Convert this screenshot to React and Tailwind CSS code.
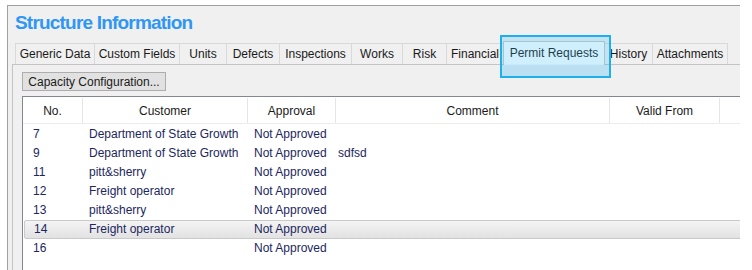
import React from "react";

const tabs = [
  { label: "Generic Data", w: "w-[80px]", first: true },
  { label: "Custom Fields", w: "w-[85px]" },
  { label: "Units", w: "w-[47px]" },
  { label: "Defects", w: "w-[53px]" },
  { label: "Inspections", w: "w-[72px]" },
  { label: "Works", w: "w-[51px]" },
  { label: "Risk", w: "w-[44px]" },
  { label: "Financial", w: "w-[57px]" },
  { label: "Permit Requests", w: "w-[102px]", selected: true },
  { label: "History", w: "w-[48px]" },
  { label: "Attachments", w: "w-[75px]" },
];

const rows = [
  ["7", "Department of State Growth", "Not Approved", ""],
  ["9", "Department of State Growth", "Not Approved", "sdfsd"],
  ["11", "pitt&sherry", "Not Approved", ""],
  ["12", "Freight operator", "Not Approved", ""],
  ["13", "pitt&sherry", "Not Approved", ""],
  ["14", "Freight operator", "Not Approved", "", true],
  ["16", "", "Not Approved", ""],
];

export default function App() {
  return (
    <div className="relative w-[752px] h-[270px] overflow-hidden bg-white font-['Liberation_Sans',Arial,sans-serif] text-[12px] text-[#1a1a1a]">
      <div className="ml-[7px] mt-[5px] w-[733px] h-[265px] border-l border-t border-[#a0a0a0] bg-[#f0f0f0] overflow-hidden">
        <div className="h-[37px] pl-[7px] pt-[6px] text-[19px] leading-[22px] font-bold tracking-[-0.8px] text-[#2e96f5]">
          Structure Information
        </div>
        <div className="flex items-end h-[21px] pl-[7px]">
          {tabs.map((t) =>
            t.selected ? (
              <div
                key={t.label}
                className={`${t.w} relative z-10 h-[24px] -mb-px -ml-px border border-b-0 border-[#c8c8c8] bg-white flex items-start justify-center pt-[4px] leading-[14px]`}
              >
                {t.label}
              </div>
            ) : (
              <div
                key={t.label}
                className={`${t.w} h-[21px] border-t border-r ${t.first ? "border-l" : ""} border-[#d9d9d9] flex items-center justify-center leading-[14px]`}
              >
                {t.label}
              </div>
            )
          )}
        </div>
        <div className="ml-[4px] border-l border-t border-[#c4c4c4] pl-[9px] pt-[7px] h-[220px]">
          <div className="w-[144px] h-[19px] border border-[#adadad] bg-[#e1e1e1] flex items-center justify-center leading-none">
            Capacity Configuration...
          </div>
          <div className="mt-[5px] w-[800px] h-[200px] border-l border-t border-[#828790] bg-white">
            <div className="flex h-[27px] pt-px border-b border-[#ececec] text-[#1a1a1a]">
              <div className="w-[60px] border-r border-[#e5e5e5] flex items-center justify-center">No.</div>
              <div className="w-[165px] border-r border-[#e5e5e5] flex items-center justify-center">Customer</div>
              <div className="w-[88px] border-r border-[#e5e5e5] flex items-center justify-center">Approval</div>
              <div className="w-[274px] border-r border-[#e5e5e5] flex items-center justify-center">Comment</div>
              <div className="w-[110px] border-r border-[#e5e5e5] flex items-center justify-center">Valid From</div>
              <div className="w-[100px]"></div>
            </div>
            <div className="pt-px">
              {rows.map((r) => (
                <div
                  key={r[0]}
                  className={
                    r[4]
                      ? "flex h-[19px] ml-px -mr-px items-center leading-[17px] text-[#1c2660] rounded-[2px] border border-[#c9c9c9] bg-gradient-to-b from-[#f4f4f4] to-[#e2e2e2]"
                      : "flex h-[19px] items-center leading-[19px] text-[#1c2660]"
                  }
                >
                  <div className={r[4] ? "w-[58px] pl-[9px]" : "w-[60px] pl-[10px]"}>{r[0]}</div>
                  <div className="w-[165px] pl-[6px] whitespace-nowrap">{r[1]}</div>
                  <div className="w-[88px] pl-[6px] whitespace-nowrap">{r[2]}</div>
                  <div className="w-[274px] pl-[2px]">{r[3]}</div>
                </div>
              ))}
            </div>
          </div>
        </div>
      </div>
      <div className="absolute z-20 left-[500px] top-[35px] w-[111px] h-[43px] border-2 border-[#1eb0ee] flex flex-col">
        <div className="h-[27px] bg-[rgba(41,182,246,0.22)]"></div>
        <div className="flex-1 bg-[rgba(41,182,246,0.27)]"></div>
      </div>
    </div>
  );
}
